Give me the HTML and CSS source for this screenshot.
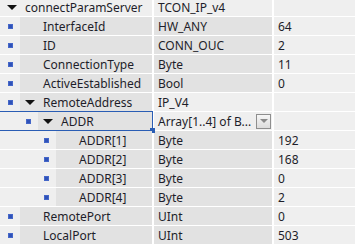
FILE: index.html
```html
<!DOCTYPE html>
<html>
  <head>
    <title>connectParamServer</title>
    <link rel="stylesheet" href="styles.css">
  </head>
  <body>
    <div class="tree">
      <div class="row top">
        <div class="name lvl0"><span class="indent"></span><span class="label"><span class="twisty"><i class="caret"></i></span>connectParamServer</span></div>
        <div class="type light">TCON_IP_v4</div>
        <div class="value"></div>
      </div>
      <div class="row">
        <div class="name lvl1"><span class="indent"><b class="dot"></b></span><span class="label"><span class="twisty"></span>InterfaceId</span></div>
        <div class="type">HW_ANY</div>
        <div class="value">64</div>
      </div>
      <div class="row">
        <div class="name lvl1"><span class="indent"><b class="dot"></b></span><span class="label"><span class="twisty"></span>ID</span></div>
        <div class="type">CONN_OUC</div>
        <div class="value">2</div>
      </div>
      <div class="row">
        <div class="name lvl1"><span class="indent"><b class="dot"></b></span><span class="label"><span class="twisty"></span>ConnectionType</span></div>
        <div class="type">Byte</div>
        <div class="value">11</div>
      </div>
      <div class="row">
        <div class="name lvl1"><span class="indent"><b class="dot"></b></span><span class="label"><span class="twisty"></span>ActiveEstablished</span></div>
        <div class="type">Bool</div>
        <div class="value">0</div>
      </div>
      <div class="row">
        <div class="name lvl1"><span class="indent"><b class="dot"></b></span><span class="label"><span class="twisty"><i class="caret"></i></span>RemoteAddress</span></div>
        <div class="type light">IP_V4</div>
        <div class="value"></div>
      </div>
      <div class="row">
        <div class="name lvl2 selected"><span class="indent"><b class="dot"></b></span><span class="label"><span class="twisty"><i class="caret"></i></span>ADDR</span><span class="handle"></span></div>
        <div class="type light">Array[1..4] of B...<span class="drop"><i></i></span></div>
        <div class="value"></div>
      </div>
      <div class="row">
        <div class="name lvl3"><span class="indent"><b class="dot"></b></span><span class="label"><span class="twisty"></span>ADDR[1]</span></div>
        <div class="type">Byte</div>
        <div class="value">192</div>
      </div>
      <div class="row">
        <div class="name lvl3"><span class="indent"><b class="dot"></b></span><span class="label"><span class="twisty"></span>ADDR[2]</span></div>
        <div class="type">Byte</div>
        <div class="value">168</div>
      </div>
      <div class="row">
        <div class="name lvl3"><span class="indent"><b class="dot"></b></span><span class="label"><span class="twisty"></span>ADDR[3]</span></div>
        <div class="type">Byte</div>
        <div class="value">0</div>
      </div>
      <div class="row">
        <div class="name lvl3"><span class="indent"><b class="dot"></b></span><span class="label"><span class="twisty"></span>ADDR[4]</span></div>
        <div class="type">Byte</div>
        <div class="value">2</div>
      </div>
      <div class="row">
        <div class="name lvl1"><span class="indent"><b class="dot"></b></span><span class="label"><span class="twisty"></span>RemotePort</span></div>
        <div class="type">UInt</div>
        <div class="value">0</div>
      </div>
      <div class="row">
        <div class="name lvl1"><span class="indent"><b class="dot"></b></span><span class="label"><span class="twisty"></span>LocalPort</span></div>
        <div class="type">UInt</div>
        <div class="value">503</div>
      </div>
    </div>
  </body>
</html>
```

FILE: styles.css
```css
* {
  margin: 0;
  padding: 0;
  box-sizing: border-box;
}
body {
  background-color: #fff;
  font-family: "Noto Sans", sans-serif;
  font-size: 12px;
  color: #1e1e2a;
  overflow: hidden;
}
.tree {
  display: flex;
  flex-direction: column;
  gap: 1px;
  margin-top: -2px;
}
.row {
  display: flex;
  gap: 2px;
  height: 18px;
}
.name {
  position: relative;
  display: flex;
  width: 152px;
}
.indent {
  display: flex;
  align-items: center;
  justify-content: flex-end;
  padding-right: 7px;
  background-color: #efefef;
}
.lvl0 .indent { width: 2px; padding: 0; }
.lvl1 .indent { width: 20px; }
.lvl2 .indent { width: 38px; }
.lvl3 .indent { width: 56px; }
.dot {
  display: block;
  width: 5px;
  height: 5px;
  background-color: #2f52b8;
  box-shadow: inset 0 0 0 1px #4466c8;
}
.label {
  flex: 1;
  display: flex;
  align-items: center;
  background-color: #e2e2e2;
  white-space: nowrap;
}
.top .label {
  background-color: #efefef;
}
.twisty {
  display: flex;
  align-items: center;
  width: 23px;
  height: 100%;
  padding-left: 5px;
}
.caret {
  width: 0;
  height: 0;
  border-left: 5px solid transparent;
  border-right: 5px solid transparent;
  border-top: 5px solid #111;
}
.selected {
  outline: 1px solid #2a5db4;
}
.handle {
  position: absolute;
  right: -3px;
  bottom: -3px;
  width: 5px;
  height: 5px;
  background-color: #2a5db4;
}
.type {
  display: flex;
  align-items: center;
  width: 118px;
  padding-left: 4px;
  background-color: #e2e2e2;
  white-space: nowrap;
}
.type.light {
  background-color: #efefef;
}
.drop {
  display: flex;
  align-items: center;
  justify-content: center;
  width: 15px;
  height: 15px;
  margin-left: auto;
  margin-right: 1px;
  border: 1px solid #8e8e8e;
  background: linear-gradient(#f6f6f6, #dcdcdc);
}
.drop i {
  width: 0;
  height: 0;
  border-left: 4px solid transparent;
  border-right: 4px solid transparent;
  border-top: 4px solid #8a8a8a;
}
.value {
  flex: 1;
  display: flex;
  align-items: center;
  padding-left: 4px;
  background-color: #efefef;
}
```
